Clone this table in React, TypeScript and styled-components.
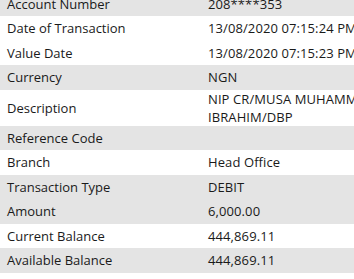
import styled, { createGlobalStyle } from "styled-components";

const GlobalStyle = createGlobalStyle`
  html, body {
    margin: 0;
    padding: 0;
    background: #ffffff;
    overflow: hidden;
  }
`;

interface DetailRow {
  label: string;
  value: string[];
  shaded: boolean;
}

const rows: DetailRow[] = [
  { label: "Account Number", value: ["208****353"], shaded: true },
  { label: "Date of Transaction", value: ["13/08/2020 07:15:24 PM"], shaded: false },
  { label: "Value Date", value: ["13/08/2020 07:15:23 PM"], shaded: false },
  { label: "Currency", value: ["NGN"], shaded: true },
  {
    label: "Description",
    value: ["NIP CR/MUSA MUHAMMAD", "IBRAHIM/DBP"],
    shaded: false,
  },
  { label: "Reference Code", value: [""], shaded: true },
  { label: "Branch", value: ["Head Office"], shaded: false },
  { label: "Transaction Type", value: ["DEBIT"], shaded: true },
  { label: "Amount", value: ["6,000.00"], shaded: true },
  { label: "Current Balance", value: ["444,869.11"], shaded: false },
  { label: "Available Balance", value: ["444,869.11"], shaded: true },
];

export default function App() {
  return (
    <>
      <GlobalStyle />
      <DetailsTable>
        {rows.map((row) => (
          <Row key={row.label} shaded={row.shaded}>
            <Label>{row.label}</Label>
            <Value>
              {row.value.map((line, i) => (
                <span key={i}>{line}</span>
              ))}
            </Value>
          </Row>
        ))}
      </DetailsTable>
    </>
  );
}

const DetailsTable = styled.div`
  width: 420px;
  margin-top: -8.5px;
  display: flex;
  flex-direction: column;
  font-family: "Open Sans", "Noto Sans", sans-serif;
  font-size: 13px;
  color: #1a1a1a;
`;

const Row = styled.div<{ shaded: boolean }>`
  display: grid;
  grid-template-columns: 200px 1fr;
  align-items: center;
  min-height: 24.5px;
  background-color: ${(props) => (props.shaded ? "#e4e4e4" : "#ffffff")};
`;

const Label = styled.div`
  padding-left: 7px;
  line-height: 18px;
  white-space: nowrap;
`;

const Value = styled.div`
  padding-left: 8px;
  display: flex;
  flex-direction: column;
  line-height: 18px;
  letter-spacing: 0.1px;
  white-space: nowrap;
`;
